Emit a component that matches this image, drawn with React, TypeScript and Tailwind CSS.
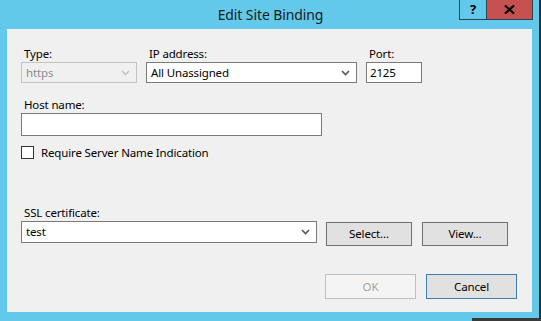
import React from 'react';

const font = { fontFamily: '"Noto Sans", "Open Sans", sans-serif' };

function Chevron({ color }: { color: string }) {
    return (
        <svg width="9" height="6" viewBox="0 0 9 6" className="shrink-0">
            <path d="M1 1 L4.5 4.5 L8 1" fill="none" stroke={color} strokeWidth="1.6" />
        </svg>
    );
}

function Combo({ value, width, disabled = false }: { value: string; width: string; disabled?: boolean }) {
    return (
        <div
            className={`${width} h-[21px] flex items-center justify-between pl-[4px] pr-[6px] border ${
                disabled ? 'border-[#c3c3c3] bg-[#f0f0f0] text-[#8d8d8d]' : 'border-[#7a7a7a] bg-white text-black'
            }`}
        >
            <span className="text-[11.5px] tracking-[-0.15px] leading-none">{value}</span>
            <Chevron color={disabled ? '#c3c3c3' : '#555'} />
        </div>
    );
}

function Label({ children }: { children: React.ReactNode }) {
    return (
        <div className="h-[17px] pl-[3px] text-[11.5px] tracking-[-0.15px] leading-[17px] text-black">{children}</div>
    );
}

export default function App() {
    return (
        <div className="relative w-[541px] h-[321px] bg-[#63c9ea] overflow-hidden" style={font}>
            {/* Title bar */}
            <div className="h-[29px] flex items-center justify-center text-[14px] tracking-[-0.1px] text-[#1b1b1b] pb-[1px]">
                Edit Site Binding
            </div>
            <div className="absolute top-0 left-[459px] flex">
                <div className="w-[28px] h-[20px] border border-t-0 border-[#2d4450] flex items-center justify-center text-[13px] font-bold text-black">
                    ?
                </div>
                <div className="w-[46px] h-[20px] bg-[#c75050] border border-l-0 border-t-0 border-[#2d4450] flex items-center justify-center">
                    <svg width="11" height="9" viewBox="0 0 11 9">
                        <path d="M1 0.5 L10 8.5 M10 0.5 L1 8.5" stroke="#000" strokeWidth="2.2" />
                    </svg>
                </div>
            </div>
            <div className="absolute top-0 left-[539px] w-[2px] h-full bg-[#2b2b2b]" />
            <div className="absolute top-[318px] left-[472px] w-[69px] h-[3px] bg-[#3a3a3a]" />

            {/* Client area */}
            <div className="ml-[7px] w-[525px] h-[283px] bg-[#f0f0f0] pl-[14px] pr-[15px] pt-[16px]">
                <div className="flex gap-[9px]">
                    <div className="flex flex-col">
                        <Label>Type:</Label>
                        <Combo value="https" width="w-[116px]" disabled />
                    </div>
                    <div className="flex flex-col">
                        <Label>IP address:</Label>
                        <Combo value="All Unassigned" width="w-[211px]" />
                    </div>
                    <div className="flex flex-col">
                        <Label>Port:</Label>
                        <div className="w-[56px] h-[21px] border border-[#7a7a7a] bg-white flex items-center pl-[3px] text-[11.5px] tracking-[-0.15px]">
                            2125
                        </div>
                    </div>
                </div>

                <div className="mt-[13px]">
                    <Label>Host name:</Label>
                    <div className="w-[301px] h-[23px] border border-[#7a7a7a] bg-white" />
                </div>

                <div className="mt-[10px] flex items-center gap-[7px] h-[13px]">
                    <div className="w-[13px] h-[13px] border border-[#333] bg-white" />
                    <span className="text-[11.5px] tracking-[-0.15px] leading-none text-black">
                        Require Server Name Indication
                    </span>
                </div>

                <div className="mt-[45px]">
                    <Label>SSL certificate:</Label>
                    <div className="flex items-start">
                        <div className="w-[296px] h-[22px] border border-[#7a7a7a] bg-white flex items-center justify-between pl-[4px] pr-[6px]">
                            <span className="text-[11.5px] tracking-[-0.15px] leading-none">test</span>
                            <Chevron color="#555" />
                        </div>
                        <button className="ml-[9px] mt-[1px] w-[86px] h-[24px] bg-[#e1e1e1] border border-[#707070] text-[11.5px] tracking-[-0.15px] text-black">
                            Select...
                        </button>
                        <button className="ml-[10px] mt-[1px] w-[86px] h-[24px] bg-[#e1e1e1] border border-[#707070] text-[11.5px] tracking-[-0.15px] text-black">
                            View...
                        </button>
                    </div>
                </div>

                <div className="mt-[28px] flex justify-end gap-[10px]">
                    <button className="w-[91px] h-[25px] bg-[#f4f4f4] border border-[#bfbfbf] text-[11.5px] tracking-[-0.15px] text-[#a3a3a3]">
                        OK
                    </button>
                    <button className="w-[91px] h-[25px] bg-[#e1e1e1] border border-[#3c7fb1] text-[11.5px] tracking-[-0.15px] text-black">
                        Cancel
                    </button>
                </div>
            </div>
        </div>
    );
}
